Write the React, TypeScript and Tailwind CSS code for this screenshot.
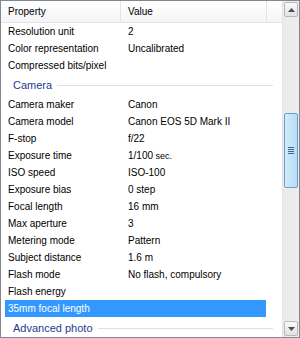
import React from 'react';

type Item =
  | { kind: 'row'; label: string; value?: string; selected?: boolean; small?: string }
  | { kind: 'group'; label: string };

const items: Item[] = [
  { kind: 'row', label: 'Resolution unit', value: '2' },
  { kind: 'row', label: 'Color representation', value: 'Uncalibrated' },
  { kind: 'row', label: 'Compressed bits/pixel' },
  { kind: 'group', label: 'Camera' },
  { kind: 'row', label: 'Camera maker', value: 'Canon' },
  { kind: 'row', label: 'Camera model', value: 'Canon EOS 5D Mark II' },
  { kind: 'row', label: 'F-stop', value: 'f/22' },
  { kind: 'row', label: 'Exposure time', value: '1/100', small: ' sec.' },
  { kind: 'row', label: 'ISO speed', value: 'ISO-100' },
  { kind: 'row', label: 'Exposure bias', value: '0 step' },
  { kind: 'row', label: 'Focal length', value: '16 mm' },
  { kind: 'row', label: 'Max aperture', value: '3' },
  { kind: 'row', label: 'Metering mode', value: 'Pattern' },
  { kind: 'row', label: 'Subject distance', value: '1.6 m' },
  { kind: 'row', label: 'Flash mode', value: 'No flash, compulsory' },
  { kind: 'row', label: 'Flash energy' },
  { kind: 'row', label: '35mm focal length', selected: true },
  { kind: 'group', label: 'Advanced photo' },
];

function Row({ item }: { item: Extract<Item, { kind: 'row' }> }) {
  return (
    <div
      className={`flex h-[17px] w-[261px] ml-[4px] shrink-0 items-center pl-[3px] ${
        item.selected ? 'bg-[#3399ff] text-white' : 'text-black'
      }`}
    >
      <div className="w-[120px] shrink-0 whitespace-nowrap">{item.label}</div>
      <div className="whitespace-nowrap">
        {item.value}
        {item.small && <span className="text-[9px]">{item.small}</span>}
      </div>
    </div>
  );
}

function Group({ label }: { label: string }) {
  return (
    <div className="flex h-[22px] shrink-0 items-center pl-[12px] pr-[9px] pt-[1px]">
      <span className="text-[11px] text-[#1e3c8c] whitespace-nowrap">{label}</span>
      <div className="ml-[5px] h-px flex-1 bg-[#dfe0e6]" />
    </div>
  );
}

export default function App() {
  return (
    <div className="flex h-[338px] w-[300px] overflow-hidden border border-[#828790] bg-white font-['Liberation_Sans',Arial,sans-serif] text-[10px]">
      {/* List */}
      <div className="flex min-w-0 flex-1 flex-col overflow-hidden">
        {/* Header */}
        <div className="flex h-[22px] shrink-0 border-b border-[#e3e4e6] bg-gradient-to-b from-white to-[#f4f5f7] text-black">
          <div className="flex w-[120px] items-center border-r border-[#e3e4e6] pl-[7px]">Property</div>
          <div className="flex w-[146px] items-center border-r border-[#e3e4e6] pl-[7px]">Value</div>
          <div className="flex-1" />
        </div>
        {items.map((it, i) =>
          it.kind === 'row' ? <Row key={i} item={it} /> : <Group key={i} label={it.label} />
        )}
      </div>

      {/* Scrollbar */}
      <div className="flex w-[17px] shrink-0 flex-col bg-[#ececec] border-l border-[#e4e4e4] px-px py-[1px]">
        <div className="flex h-[15px] items-center justify-center rounded-[2px] border border-[#b8b8b8] bg-gradient-to-b from-[#fbfbfb] to-[#e2e2e2]">
          <svg width="7" height="4" viewBox="0 0 7 4">
            <path d="M0 4 L3.5 0 L7 4 Z" fill="#4d4d4d" />
          </svg>
        </div>
        <div className="h-[96px]" />
        <div className="flex h-[75px] items-center justify-center rounded-[2px] border border-[#6f9ccb] bg-gradient-to-r from-[#d3ecfa] to-[#b6dcf5]">
          <div className="flex flex-col gap-[1px]">
            <div className="h-px w-[6px] bg-[#3c6a92]" />
            <div className="h-px w-[6px] bg-[#3c6a92]" />
            <div className="h-px w-[6px] bg-[#3c6a92]" />
            <div className="h-px w-[6px] bg-[#3c6a92]" />
          </div>
        </div>
        <div className="flex-1" />
        <div className="flex h-[15px] items-center justify-center rounded-[2px] border border-[#b8b8b8] bg-gradient-to-b from-[#fbfbfb] to-[#e2e2e2]">
          <svg width="7" height="4" viewBox="0 0 7 4">
            <path d="M0 0 L7 0 L3.5 4 Z" fill="#4d4d4d" />
          </svg>
        </div>
      </div>
    </div>
  );
}
